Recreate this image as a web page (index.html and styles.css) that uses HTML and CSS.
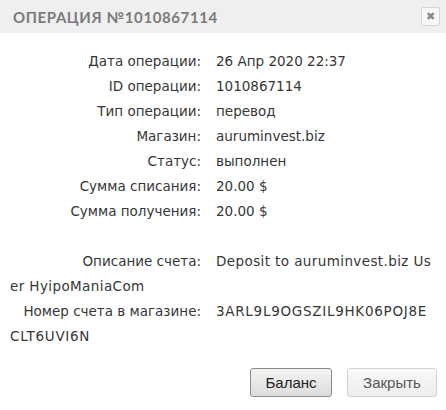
FILE: index.html
```html
<!DOCTYPE html>
<html>
<head>
<meta charset="utf-8">
<link rel="stylesheet" href="styles.css">
</head>
<body>
<div class="dialog">
  <div class="header">
    <div class="title">ОПЕРАЦИЯ №1010867114</div>
    <button class="close" type="button">✖</button>
  </div>
  <div class="content">
    <p class="row"><span class="label">Дата операции:</span>26 Апр 2020 22:37</p>
    <p class="row"><span class="label">ID операции:</span>1010867114</p>
    <p class="row"><span class="label">Тип операции:</span>перевод</p>
    <p class="row"><span class="label">Магазин:</span>auruminvest.biz</p>
    <p class="row"><span class="label">Статус:</span>выполнен</p>
    <p class="row"><span class="label">Сумма списания:</span>20.00 $</p>
    <p class="row"><span class="label">Сумма получения:</span>20.00 $</p>
    <p class="row spacer"></p>
    <p class="row wrap wrap-desc"><span class="label">Описание счета:</span>Deposit to auruminvest.biz User HyipoManiaCom</p>
    <p class="row wrap wrap-code"><span class="label">Номер счета в магазине:</span>3ARL9L9OGSZIL9HK06POJ8ECLT6UVI6N</p>
  </div>
  <div class="actions">
    <button class="btn btn-primary" type="button">Баланс</button>
    <button class="btn btn-secondary" type="button">Закрыть</button>
  </div>
</div>
</body>
</html>
```
FILE: styles.css
```css
html, body {
  margin: 0;
  padding: 0;
  background: #ffffff;
}
.dialog {
  width: 446px;
  height: 410px;
  font-family: "DejaVu Sans", sans-serif;
  color: #363636;
}
.header {
  height: 33px;
  background: #efefef;
  display: flex;
  align-items: center;
  justify-content: space-between;
  padding: 0 6px 0 13px;
}
.title {
  font-family: "Lato", sans-serif;
  font-weight: 700;
  font-size: 15px;
  letter-spacing: 0.6px;
  color: #7b7b7b;
}
.close {
  width: 19px;
  height: 19px;
  padding: 0;
  margin: 0;
  border: 1px solid #d6d6d6;
  border-radius: 2px;
  background: #f7f7f7;
  color: #8a8a8a;
  font-size: 11px;
  line-height: 17px;
  font-family: "DejaVu Sans", sans-serif;
  text-align: center;
}
.content {
  padding: 16px 14px 0 10px;
  font-size: 13.5px;
}
.row {
  margin: 0;
  line-height: 25px;
  min-height: 25px;
}
.wrap {
  word-break: break-all;
}
.wrap-desc {
  letter-spacing: 0.4px;
}
.wrap-code {
  letter-spacing: 0.72px;
}
.label {
  display: inline-block;
  width: 191px;
  text-align: right;
  margin-right: 15px;
  word-break: normal;
  letter-spacing: 0;
}
.actions {
  display: flex;
  justify-content: flex-end;
  gap: 15px;
  padding: 19px 9px 0 0;
}
.btn {
  font-family: "Liberation Sans", sans-serif;
  font-size: 15px;
  height: 29px;
  border-radius: 3px;
  padding: 0;
}
.btn-primary {
  width: 82px;
  border: 1px solid #8c8c8c;
  background: linear-gradient(#f4f4f4, #dcdcdc);
  color: #222222;
}
.btn-secondary {
  width: 90px;
  border: 1px solid #d2d2d2;
  background: linear-gradient(#f9f9f9, #ededed);
  color: #555555;
}
```
